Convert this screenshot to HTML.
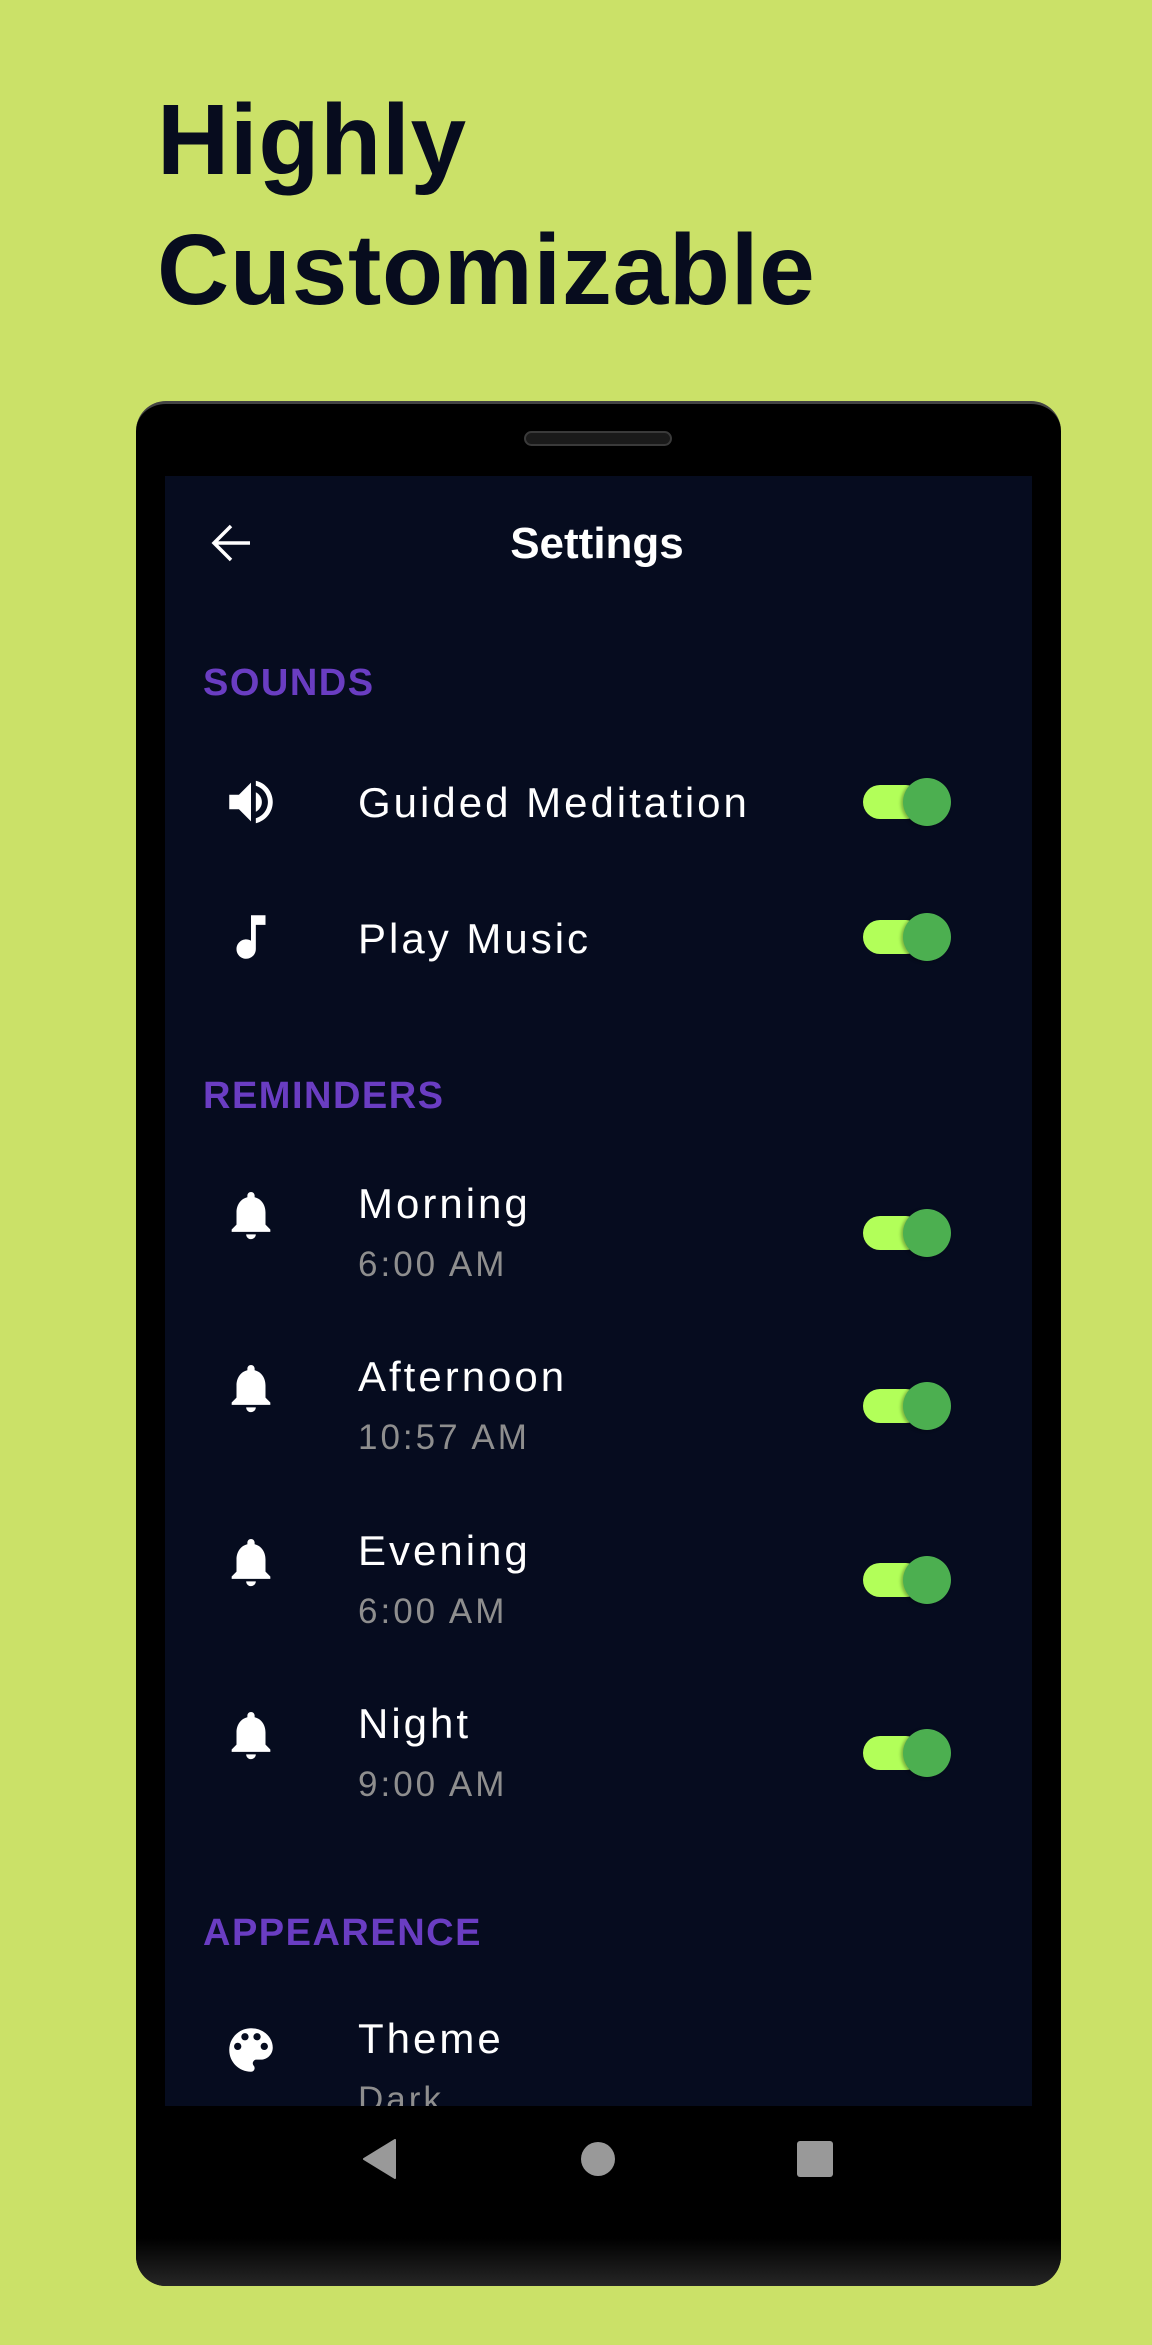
<!DOCTYPE html>
<html><head><meta charset="utf-8"><style>
*{margin:0;padding:0;box-sizing:border-box}
body{width:1152px;height:2345px;background:#cbe168;position:relative;overflow:hidden;font-family:"Liberation Sans",sans-serif}
.a{position:absolute;white-space:nowrap;line-height:1}
.h{font-weight:700;font-size:100px;color:#070c1e;left:157px;letter-spacing:0.7px}
.phone{position:absolute;left:136px;top:401px;width:925px;height:1885px;border-radius:30px;background:#000;overflow:hidden;border-top:3px solid #444}
.chin{position:absolute;left:0;right:0;bottom:0;height:48px;background:linear-gradient(#000,#262626)}
.screen{position:absolute;left:165px;top:476px;width:867px;height:1630px;background:#060c1f;overflow:hidden}
.sec{color:#6a3dc2;font-weight:700;font-size:38px;left:203px;letter-spacing:1.5px}
.t{color:#fff;font-size:42px;left:358px;letter-spacing:3px}
.s{color:#8e8e8e;font-size:35px;left:358px;letter-spacing:3px}
.ic{position:absolute;width:58px;height:58px;fill:#fff}
.tg{position:absolute;left:863px;width:72px;height:34px}
.tg .tr{position:absolute;left:0;top:0;width:60px;height:34px;border-radius:17px;background:#b2ff59}
.tg .th{position:absolute;left:40px;top:-7px;width:48px;height:48px;border-radius:50%;background:#4caf50;box-shadow:-2px 1px 3px rgba(0,0,0,.3)}
</style></head><body>
<div class="a h" style="top:90px">Highly</div>
<div class="a h" style="top:220px">Customizable</div>
<div class="phone"><div class="chin"></div></div>
<div style="position:absolute;left:524px;top:431px;width:148px;height:15px;border-radius:8px;background:#1a1a1a;border:2px solid #3a3a3a"></div>
<div class="screen"></div>
<svg style="position:absolute;left:210px;top:521px" width="44" height="44" viewBox="0 0 44 44"><path d="M40 22H5M21 5L4 22l17 17" fill="none" stroke="#fff" stroke-width="3.5"/></svg>
<div class="a" style="left:0;width:1194px;text-align:center;top:522px;color:#fff;font-weight:700;font-size:44px">Settings</div>

<div class="a sec" style="top:664px">SOUNDS</div>
<svg class="ic" style="left:222px;top:773px" viewBox="0 0 24 24"><path d="M3 9v6h4l5 5V4L7 9H3zm13.5 3c0-1.77-1.020-3.29-2.5-4.03v8.05c1.48-.73 2.5-2.25 2.5-4.02zM14 3.23v2.06c2.89.86 5 3.54 5 6.71s-2.11 5.85-5 6.71v2.06c4.01-.91 7-4.49 7-8.77s-2.99-7.86-7-8.77z"/></svg>
<div class="a t" style="top:782px">Guided Meditation</div>
<div class="tg" style="top:785px"><div class="tr"></div><div class="th"></div></div>
<svg class="ic" style="left:222px;top:908px" viewBox="0 0 24 24"><path d="M12 3v10.55c-.59-.34-1.27-.55-2-.55-2.21 0-4 1.79-4 4s1.79 4 4 4 4-1.79 4-4V7h4V3h-6z"/></svg>
<div class="a t" style="top:918px">Play Music</div>
<div class="tg" style="top:920px"><div class="tr"></div><div class="th"></div></div>

<div class="a sec" style="top:1077px">REMINDERS</div>

<svg class="ic" style="left:222px;top:1186px" viewBox="0 0 24 24"><path d="M12 22c1.1 0 2-.9 2-2h-4c0 1.1.89 2 2 2zm6-6v-5c0-3.07-1.64-5.64-4.5-6.32V4c0-.83-.67-1.5-1.5-1.5s-1.5.67-1.5 1.5v.68C7.63 5.36 6 7.92 6 11v5l-2 2v1h16v-1l-2-2z"/></svg>
<div class="a t" style="top:1183px">Morning</div>
<div class="a s" style="top:1247px">6:00 AM</div>
<div class="tg" style="top:1216px"><div class="tr"></div><div class="th"></div></div>

<svg class="ic" style="left:222px;top:1359px" viewBox="0 0 24 24"><path d="M12 22c1.1 0 2-.9 2-2h-4c0 1.1.89 2 2 2zm6-6v-5c0-3.07-1.64-5.64-4.5-6.32V4c0-.83-.67-1.5-1.5-1.5s-1.5.67-1.5 1.5v.68C7.63 5.36 6 7.92 6 11v5l-2 2v1h16v-1l-2-2z"/></svg>
<div class="a t" style="top:1356px">Afternoon</div>
<div class="a s" style="top:1420px">10:57 AM</div>
<div class="tg" style="top:1389px"><div class="tr"></div><div class="th"></div></div>

<svg class="ic" style="left:222px;top:1533px" viewBox="0 0 24 24"><path d="M12 22c1.1 0 2-.9 2-2h-4c0 1.1.89 2 2 2zm6-6v-5c0-3.07-1.64-5.64-4.5-6.32V4c0-.83-.67-1.5-1.5-1.5s-1.5.67-1.5 1.5v.68C7.63 5.36 6 7.92 6 11v5l-2 2v1h16v-1l-2-2z"/></svg>
<div class="a t" style="top:1530px">Evening</div>
<div class="a s" style="top:1594px">6:00 AM</div>
<div class="tg" style="top:1563px"><div class="tr"></div><div class="th"></div></div>

<svg class="ic" style="left:222px;top:1706px" viewBox="0 0 24 24"><path d="M12 22c1.1 0 2-.9 2-2h-4c0 1.1.89 2 2 2zm6-6v-5c0-3.07-1.64-5.64-4.5-6.32V4c0-.83-.67-1.5-1.5-1.5s-1.5.67-1.5 1.5v.68C7.63 5.36 6 7.92 6 11v5l-2 2v1h16v-1l-2-2z"/></svg>
<div class="a t" style="top:1703px">Night</div>
<div class="a s" style="top:1767px">9:00 AM</div>
<div class="tg" style="top:1736px"><div class="tr"></div><div class="th"></div></div>

<div class="a sec" style="top:1914px">APPEARENCE</div>
<svg class="ic" style="left:222px;top:2021px" viewBox="0 0 24 24"><path d="M12 3c-4.97 0-9 4.03-9 9s4.03 9 9 9c.83 0 1.5-.67 1.5-1.5 0-.39-.15-.74-.39-1.01-.23-.26-.38-.61-.38-.99 0-.83.67-1.5 1.5-1.5H16c2.76 0 5-2.24 5-5 0-4.42-4.03-8-9-8zm-5.5 9c-.83 0-1.5-.67-1.5-1.5S5.67 9 6.5 9 8 9.67 8 10.5 7.33 12 6.5 12zm3-4C8.67 8 8 7.33 8 6.5S8.67 5 9.5 5s1.5.67 1.5 1.5S10.33 8 9.5 8zm5 0c-.83 0-1.5-.67-1.5-1.5S13.67 5 14.5 5s1.5.67 1.5 1.5S15.33 8 14.5 8zm3 4c-.83 0-1.5-.67-1.5-1.5S16.67 9 17.5 9s1.5.67 1.5 1.5-.67 1.5-1.5 1.5z"/></svg>
<div class="a t" style="top:2018px">Theme</div>
<div style="position:absolute;left:165px;top:2080px;width:867px;height:26px;overflow:hidden"><div class="a s" style="left:193px;top:2px">Dark</div></div>

<svg style="position:absolute;left:360px;top:2139px" width="40" height="40" viewBox="0 0 40 40"><path d="M35 1 L35 39 L4 20 Z" fill="#999" stroke="#999" stroke-width="2" stroke-linejoin="round"/></svg>
<div style="position:absolute;left:581px;top:2142px;width:34px;height:34px;border-radius:50%;background:#999"></div>
<div style="position:absolute;left:797px;top:2141px;width:36px;height:36px;border-radius:3px;background:#999"></div>
</body></html>
